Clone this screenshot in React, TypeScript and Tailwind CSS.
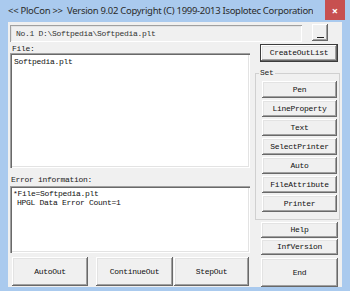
import React from "react";

const mono = { fontFamily: '"Liberation Mono", "DejaVu Sans Mono", monospace' };

function Btn({ label, className = "" }: { label: string; className?: string }) {
  return (
    <div
      className={`flex items-center justify-center bg-[#f0f0f0] text-[8px] tracking-[-0.3px] text-[#111] shadow-[inset_-1px_-1px_0_#696969,inset_1px_1px_0_#ffffff,inset_-2px_-2px_0_#a0a0a0,inset_2px_2px_0_#e3e3e3] ${className}`}
      style={mono}
    >
      {label}
    </div>
  );
}

export default function App() {
  return (
    <div className="w-[350px] h-[291px] bg-[#aacaee] flex flex-col overflow-hidden" style={{ fontFamily: '"Noto Sans", "Open Sans", sans-serif' }}>
      {/* Title bar */}
      <div className="h-[22px] flex items-start shrink-0">
        <div className="min-w-0 overflow-hidden pl-[8px] pt-[4px] text-[9.5px] leading-[14px] text-[#2a2a2a] whitespace-pre tracking-[-0.3px]">
          {"<< PloCon >>  Version 9.02 Copyright (C) 1999-2013 Isoplotec Corporation"}
        </div>
        <div className="shrink-0 ml-auto mr-[5px] w-[20px] h-[20px] bg-[#c75050] flex items-center justify-center text-white text-[11px] font-bold leading-none">
          ×
        </div>
      </div>

      {/* Client area */}
      <div className="mx-[8px] h-[265px] bg-[#f0f0f0] pl-[2px] pt-[2px] flex flex-col" style={mono}>
        {/* Row 1 */}
        <div className="flex h-[18px] items-start">
          <div className="mt-[1px] w-[292px] h-[17px] flex items-center pl-[6px] text-[8px] tracking-[-0.3px] text-[#333] shadow-[inset_1px_1px_0_#a0a0a0,inset_-1px_-1px_0_#ffffff,inset_2px_2px_0_#e3e3e3]">
            No.1 D:\Softpedia\Softpedia.plt
          </div>
          <div className="ml-[10px] w-[16px] h-[17px] bg-[#f0f0f0] flex items-end justify-center pb-[3px] shadow-[inset_-1px_-1px_0_#696969,inset_1px_1px_0_#ffffff,inset_-2px_-2px_0_#a0a0a0]">
            <div className="w-[7px] h-[1px] bg-[#222]" />
          </div>
        </div>

        {/* Main row */}
        <div className="flex">
          {/* Left column */}
          <div className="w-[240px] flex flex-col">
            <div className="h-[11px] flex items-end pl-[2px] text-[8px] leading-[9px] tracking-[-0.3px] text-[#222]">File:</div>
            <div className="h-[115px] bg-white pl-[4px] pt-[4px] text-[8px] leading-[10px] tracking-[-0.3px] text-[#111] shadow-[inset_1px_1px_0_#a0a0a0,inset_2px_2px_0_#696969,inset_-1px_-1px_0_#ffffff,inset_-2px_-2px_0_#e3e3e3]">
              Softpedia.plt
            </div>
            <div className="h-[18px] flex items-end pb-[2px] pl-[1px] text-[8px] leading-[9px] tracking-[-0.3px] text-[#222]">Error information:</div>
            <div className="h-[67px] bg-white pl-[3px] pt-[3px] text-[8px] leading-[9px] tracking-[-0.3px] text-[#111] shadow-[inset_1px_1px_0_#a0a0a0,inset_2px_2px_0_#696969,inset_-1px_-1px_0_#ffffff,inset_-2px_-2px_0_#e3e3e3]">
              <div>*File=Softpedia.plt</div>
              <div className="pl-[4px]">HPGL Data Error Count=1</div>
            </div>
            <div className="flex mt-[4px] pl-[2px]">
              <Btn label="AutoOut" className="w-[76px] h-[29px]" />
              <Btn label="ContinueOut" className="ml-[8px] w-[77px] h-[29px]" />
              <Btn label="StepOut" className="ml-[1px] w-[75px] h-[29px]" />
            </div>
          </div>

          {/* Right column */}
          <div className="ml-[5px] w-[86px] flex flex-col">
            <div className="ml-[5px] mt-[2px] w-[78px] h-[18px] border border-[#3c3c3c] flex">
              <Btn label="CreateOutList" className="flex-1" />
            </div>
            <div className="relative mt-[11px] w-[85px] border border-[#d0d0d0] pt-[7px] pb-[7px] pl-[6px] flex flex-col gap-[2px]">
              <div className="absolute left-[3px] top-[-6px] bg-[#f0f0f0] px-[1px] text-[8px] leading-[10px] tracking-[-0.3px] text-[#222]">Set</div>
              <Btn label="Pen" className="w-[75px] h-[17px]" />
              <Btn label="LineProperty" className="w-[75px] h-[17px]" />
              <Btn label="Text" className="w-[75px] h-[17px]" />
              <Btn label="SelectPrinter" className="w-[75px] h-[17px]" />
              <Btn label="Auto" className="w-[75px] h-[17px]" />
              <Btn label="FileAttribute" className="w-[75px] h-[17px]" />
              <Btn label="Printer" className="w-[75px] h-[17px]" />
            </div>
            <div className="ml-[6px] mt-[2px] flex flex-col gap-[1px]">
              <Btn label="Help" className="w-[77px] h-[16px]" />
              <Btn label="InfVersion" className="w-[77px] h-[16px]" />
              <Btn label="End" className="mt-[2px] w-[77px] h-[29px]" />
            </div>
          </div>
        </div>
      </div>
    </div>
  );
}
